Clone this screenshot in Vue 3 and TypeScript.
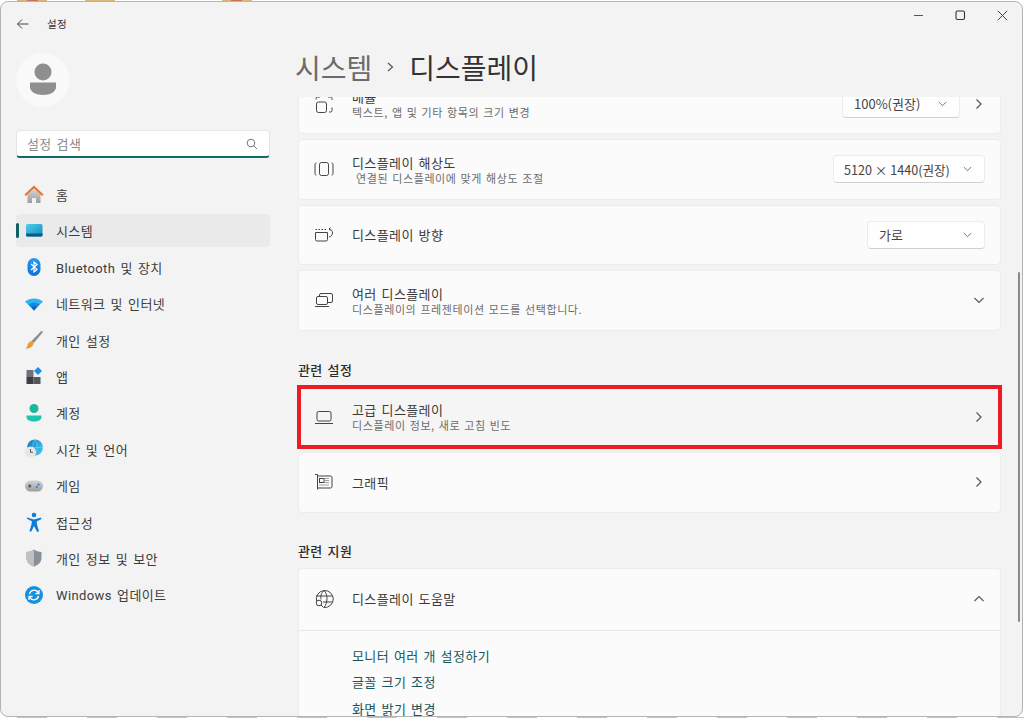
<script setup lang="ts">
const navItems = [
  { id: 'home', label: '홈' },
  { id: 'system', label: '시스템', active: true },
  { id: 'bluetooth', label: 'Bluetooth 및 장치' },
  { id: 'network', label: '네트워크 및 인터넷' },
  { id: 'brush', label: '개인 설정' },
  { id: 'apps', label: '앱' },
  { id: 'account', label: '계정' },
  { id: 'time', label: '시간 및 언어' },
  { id: 'game', label: '게임' },
  { id: 'access', label: '접근성' },
  { id: 'shield', label: '개인 정보 및 보안' },
  { id: 'update', label: 'Windows 업데이트' },
]

const links = ['모니터 여러 개 설정하기', '글꼴 크기 조정', '화면 밝기 변경']
</script>

<template>
  <div class="desktop">
    <div class="window">
      <aside class="sidebar">
        <div class="titlebar">
          <svg class="back" width="14" height="14" viewBox="0 0 14 14" fill="none" stroke="#444" stroke-width="1">
            <path d="M12.5 7H1.5M6 2.5 1.5 7 6 11.500" />
          </svg>
          <span>설정</span>
        </div>

        <div class="avatar">
          <svg width="28" height="34" viewBox="0 0 28 34">
            <circle cx="14" cy="9" r="8.500" fill="#8f8f8f" />
            <path d="M1 19.500h26v4.500c0 5-6 8-13 8S1 29 1 24z" fill="#8f8f8f" />
          </svg>
        </div>

        <div class="search">
          <span>설정 검색</span>
          <svg width="12" height="12" viewBox="0 0 12 12" fill="none" stroke="#777" stroke-width="1">
            <circle cx="5" cy="5" r="3.800" />
            <path d="M7.800 7.800 11 11" />
          </svg>
        </div>

        <nav class="nav">
          <div v-for="item in navItems" :key="item.id" class="nav-item" :class="{ active: item.active }">
            <svg class="nav-icon" width="20" height="20" viewBox="0 0 20 20">
              <defs>
                <linearGradient id="sysGrad" x1="0" y1="0" x2="1" y2="1">
                  <stop offset="0" stop-color="#4fd0ea" />
                  <stop offset="1" stop-color="#1488c4" />
                </linearGradient>
                <linearGradient id="blueGrad" x1="0" y1="0" x2="0" y2="1">
                  <stop offset="0" stop-color="#2a9bf0" />
                  <stop offset="1" stop-color="#0a6fd8" />
                </linearGradient>
                <linearGradient id="greyGrad" x1="0" y1="0" x2="0" y2="1">
                  <stop offset="0" stop-color="#d4d4d4" />
                  <stop offset="1" stop-color="#9d9d9d" />
                </linearGradient>
                <linearGradient id="globeGrad" x1="0" y1="0" x2="1" y2="0.500">
                  <stop offset="0" stop-color="#1272c0" />
                  <stop offset="1" stop-color="#3fc0ea" />
                </linearGradient>
              </defs>
              <template v-if="item.id === 'home'">
                <path d="M3.500 9.500 10 4l6.500 5.500V18H12v-5H8v5H3.500z" fill="url(#greyGrad)" />
                <path d="M1.200 10.200 10 2l8.800 8.200" fill="none" stroke="#e8762a" stroke-width="2.200" />
              </template>
              <template v-else-if="item.id === 'system'">
                <rect x="2" y="3" width="16.500" height="12.500" rx="1.500" fill="url(#sysGrad)" />
                <path d="M2 12.500h16.500v1.500a1.500 1.500 0 0 1-1.500 1.500H3.500A1.500 1.500 0 0 1 2 14z" fill="#0f5b7e" />
              </template>
              <template v-else-if="item.id === 'bluetooth'">
                <rect x="3.500" y="1" width="13" height="18" rx="6.500" fill="url(#blueGrad)" />
                <path d="M7 7l6 5.500-3 2.500V5l3 2.500L7 13" fill="none" stroke="#fff" stroke-width="1.200" />
              </template>
              <template v-else-if="item.id === 'network'">
                <path d="M1 7.500C6 3.500 14 3.500 19 7.500L10 16.500z" fill="#2fb3f2" />
                <path d="M4.500 10.500C8 8 12 8 15.500 10.500L10 16.500z" fill="#1488e0" />
                <path d="M7.300 13.200C9 12 11 12 12.700 13.200L10 16.500z" fill="#0a62c4" />
              </template>
              <template v-else-if="item.id === 'brush'">
                <path d="M17.500.800 19 2 9.800 13 7.500 11z" fill="#8a8f94" />
                <path d="M7.500 11 9.800 13c-.5 3.500-4.500 6-8.800 5.500 2.200-1 2.200-2.500 2.700-4 .5-1.500 2.300-3.200 3.800-3.500z" fill="#ef9a2e" />
              </template>
              <template v-else-if="item.id === 'apps'">
                <rect x="2.500" y="4" width="7" height="7" fill="#6f7378" />
                <rect x="2.500" y="11" width="7" height="7" fill="#3b3f44" />
                <rect x="9.500" y="11" width="7" height="7" fill="#55595e" />
                <path d="M14 1l4 4-4 4-4-4z" fill="#1b8fe4" />
              </template>
              <template v-else-if="item.id === 'account'">
                <circle cx="10" cy="5.500" r="4.500" fill="#18b8a0" />
                <path d="M2.500 12.500h15v1.500c0 3-3.500 4.500-7.500 4.500s-7.500-1.500-7.500-4.500z" fill="#1cc5ac" />
              </template>
              <template v-else-if="item.id === 'time'">
                <circle cx="11" cy="8.500" r="8" fill="url(#globeGrad)" />
                <path d="M11 .500c-3 4-3 11 0 16M11 .500c3 4 3 11 0 16M3 8.500h16" fill="none" stroke="#8fdcf2" stroke-width=".500" />
                <circle cx="6.500" cy="13" r="5.500" fill="#e6e6e6" />
                <path d="M6.500 10v3.300h2.500" fill="none" stroke="#555" stroke-width="1" />
              </template>
              <template v-else-if="item.id === 'game'">
                <rect x="1" y="4.500" width="18" height="11" rx="5.500" fill="url(#greyGrad)" />
                <path d="M4 10h3.500M5.750 8.200v3.600" stroke="#444" stroke-width="1" />
                <circle cx="14.500" cy="8.500" r="1.100" fill="#1b7fd8" />
                <circle cx="12.800" cy="11" r="1.100" fill="#1b7fd8" />
              </template>
              <template v-else-if="item.id === 'access'">
                <circle cx="10" cy="3" r="2.300" fill="#0f7bd8" />
                <path d="M3 5.500 10 7.500l7-2 .6 1.400-5 2.500.5 3.500 2 6.500-2 .3L10 14l-2.600 5.500-2-.3 2-6.500.5-3.500-5-2.500z" fill="#0f7bd8" />
              </template>
              <template v-else-if="item.id === 'shield'">
                <path d="M10 1.500c2 1.500 4.500 2.500 7.500 2.500v6c0 4.500-3.500 7-7.500 8.500-4-1.500-7.500-4-7.500-8.500V4c3 0 5.500-1 7.500-2.500z" fill="#8b9096" />
                <path d="M10 1.500v17c-4-1.500-7.500-4-7.500-8.500V4c3 0 5.500-1 7.500-2.500z" fill="#bcc0c4" />
              </template>
              <template v-else-if="item.id === 'update'">
                <circle cx="10" cy="10" r="9" fill="#1690e0" />
                <path d="M5.500 9a4.700 4.700 0 0 1 8.300-2l.7 1M14.500 11a4.700 4.700 0 0 1-8.300 2l-.7-1" fill="none" stroke="#fff" stroke-width="1.300" />
                <path d="M15 5v3.500h-3.500M5 15v-3.500h3.500" fill="none" stroke="#fff" stroke-width="1.300" />
              </template>
            </svg>
            <span>{{ item.label }}</span>
          </div>
        </nav>
      </aside>

      <main class="content">
        <div class="controls">
          <svg width="11" height="11" viewBox="0 0 11 11" stroke="#555" fill="none"><path d="M1 5.500h9" stroke-width="1.200" /></svg>
          <svg width="11" height="11" viewBox="0 0 11 11" stroke="#333" fill="none"><rect x="1" y="1" width="8.500" height="8.500" rx="1.500" stroke-width="1.100" /></svg>
          <svg width="11" height="11" viewBox="0 0 11 11" stroke="#444" fill="none"><path d="M.800.800l9.400 9.400M10.200.800l-9.400 9.400" /></svg>
        </div>

        <h1 class="page-title">
          <span class="crumb">시스템</span>
          <svg width="9" height="12" viewBox="0 0 9 12" fill="none" stroke="#555" stroke-width="1.200"><path d="M2 2l4.500 4L2 10" /></svg>
          <span>디스플레이</span>
        </h1>

        <div class="scroller">
          <section class="card first">
            <svg class="row-icon" width="20" height="18" viewBox="0 0 20 18" fill="none" stroke="#444" stroke-width="1">
              <rect x="2.500" y="7" width="10" height="10.500" rx="2" />
              <path d="M2 4.500V3.500A1.500 1.500 0 0 1 3.500 2H6M14 2h2.500A1.500 1.500 0 0 1 18 3.500V5M18 12.500v3a1.500 1.500 0 0 1-1.500 1.500H15" />
            </svg>
            <div class="row-text">
              <div class="row-title">배율</div>
              <div class="row-sub">텍스트, 앱 및 기타 항목의 크기 변경</div>
            </div>
            <div class="select scale">
              <span>100%(권장)</span>
              <svg width="9" height="6" viewBox="0 0 9 6" fill="none" stroke="#777"><path d="M.800 1 4.500 4.700 8.200 1" /></svg>
            </div>
            <svg class="chev" width="8" height="12" viewBox="0 0 8 12" fill="none" stroke="#555" stroke-width="1.200"><path d="M1.500 1.500 6 6l-4.500 4.500" /></svg>
          </section>

          <section class="card">
            <svg class="row-icon" width="20" height="18" viewBox="0 0 20 18" fill="none" stroke="#444" stroke-width="1">
              <rect x="5.500" y="2.500" width="9" height="13" rx="2" />
              <path d="M2.500 3C1.500 3 1 3.500 1 4.500v9c0 1 .5 1.500 1.500 1.500M17.500 3c1 0 1.500.5 1.500 1.500v9c0 1-.5 1.500-1.500 1.500" />
            </svg>
            <div class="row-text">
              <div class="row-title">디스플레이 해상도</div>
              <div class="row-sub indent">연결된 디스플레이에 맞게 해상도 조절</div>
            </div>
            <div class="select res">
              <span>5120 × 1440(권장)</span>
              <svg width="9" height="6" viewBox="0 0 9 6" fill="none" stroke="#777"><path d="M.800 1 4.500 4.700 8.200 1" /></svg>
            </div>
          </section>

          <section class="card">
            <svg class="row-icon" width="20" height="18" viewBox="0 0 20 18" fill="none" stroke="#444" stroke-width="1">
              <path d="M1.500 6.500h12v7a1.500 1.500 0 0 1-1.500 1.500H3a1.500 1.500 0 0 1-1.500-1.500z" />
              <path d="M1.500 3.500h12" stroke-dasharray="1.500 1.500" stroke-width="1.200" />
              <path d="M15 3c2.500.5 3.500 2 3.500 4s-1.500 3.500-3.500 4M16.500 1.500 15 3l1.500 1.500" />
            </svg>
            <div class="row-text">
              <div class="row-title">디스플레이 방향</div>
            </div>
            <div class="select dir">
              <span>가로</span>
              <svg width="9" height="6" viewBox="0 0 9 6" fill="none" stroke="#777"><path d="M.800 1 4.500 4.700 8.200 1" /></svg>
            </div>
          </section>

          <section class="card">
            <svg class="row-icon" width="20" height="18" viewBox="0 0 20 18" fill="none" stroke="#444" stroke-width="1">
              <rect x="5.500" y="2.500" width="13" height="9" rx="1.500" />
              <rect x="2.500" y="5.500" width="11" height="8" rx="1.500" fill="#fbfbfb" />
              <path d="M1 15.500h14" />
            </svg>
            <div class="row-text">
              <div class="row-title">여러 디스플레이</div>
              <div class="row-sub">디스플레이의 프레젠테이션 모드를 선택합니다.</div>
            </div>
            <svg class="chev-down" width="12" height="8" viewBox="0 0 12 8" fill="none" stroke="#555" stroke-width="1.100"><path d="M1.500 2 6 6.500 10.500 2" /></svg>
          </section>

          <h2 class="section">관련 설정</h2>

          <section class="card highlighted">
            <svg class="row-icon" width="20" height="18" viewBox="0 0 20 18" fill="none" stroke="#444" stroke-width="1">
              <rect x="3" y="3.500" width="14" height="9.500" rx="1.500" />
              <path d="M1 15.500h18" />
            </svg>
            <div class="row-text">
              <div class="row-title">고급 디스플레이</div>
              <div class="row-sub">디스플레이 정보, 새로 고침 빈도</div>
            </div>
            <svg class="chev" width="8" height="12" viewBox="0 0 8 12" fill="none" stroke="#555" stroke-width="1.200"><path d="M1.500 1.500 6 6l-4.500 4.500" /></svg>
          </section>

          <section class="card graphics">
            <svg class="row-icon" width="20" height="18" viewBox="0 0 20 18" fill="none" stroke="#444" stroke-width="1">
              <path d="M1 1.500h2.500v15M3.500 15h13a1.500 1.500 0 0 0 1.500-1.500v-9A1.500 1.500 0 0 0 16.500 3h-13" />
              <rect x="5.500" y="5.500" width="4.500" height="4" />
              <path d="M11.500 5.500h4M11.500 7.500h4M11.500 9.500h4M5.500 12h10" stroke-dasharray="1 1" />
            </svg>
            <div class="row-text">
              <div class="row-title">그래픽</div>
            </div>
            <svg class="chev" width="8" height="12" viewBox="0 0 8 12" fill="none" stroke="#555" stroke-width="1.200"><path d="M1.500 1.500 6 6l-4.500 4.500" /></svg>
          </section>

          <h2 class="section support">관련 지원</h2>

          <section class="card help">
            <div class="help-head">
              <svg class="row-icon" width="20" height="20" viewBox="0 0 20 20" fill="none" stroke="#444" stroke-width="1">
                <path d="M2.500 12A8.500 8.500 0 1 1 10 18.500" />
                <path d="M2 7h16M9 13h9.300M10 1.500c-3 2.500-3.500 6-3 9M10 1.500c4 4 4 12 0 17" />
                <circle cx="5" cy="14" r="2.800" />
                <path d="M7 16l2.500 2.500" />
              </svg>
              <div class="row-title">디스플레이 도움말</div>
              <svg class="chev-down" width="12" height="8" viewBox="0 0 12 8" fill="none" stroke="#555" stroke-width="1.100"><path d="M1.500 6 6 1.500 10.500 6" /></svg>
            </div>
            <div class="help-links">
              <a v-for="link in links" :key="link">{{ link }}</a>
            </div>
          </section>
        </div>

        <div class="scrollbar"></div>
      </main>
    </div>
  </div>
</template>

<style>
html, body {
  margin: 0;
  background: #fff;
}
</style>

<style scoped>
/* the 1px wallpaper slivers that show above and below the window */
.desktop {
  width: 1024px;
  height: 718px;
  box-sizing: border-box;
  padding: 1px 1px 1px 0;
  overflow: hidden;
  background:
    linear-gradient(90deg, transparent 17px, #d8b878 17px, #d8b878 27px, #d0705a 27px, #d0705a 38px, #d8b878 38px, #d8b878 47px, transparent 47px, transparent 85px, #d8b878 85px, #d8b878 115px, transparent 115px, transparent 222px, #d8b878 222px, #d8b878 231px, #d0705a 231px, #d0705a 242px, #d8b878 242px, #d8b878 252px, transparent 252px) top / 100% 1px no-repeat,
    repeating-linear-gradient(90deg, #d8c48a 0, #d8c48a 30px, transparent 30px, transparent 70px) 17px bottom / 100% 1px no-repeat,
    #fff;
}

.window {
  height: 716px;
  box-sizing: border-box;
  display: flex;
  overflow: hidden;
  background: #f3f3f3;
  border: 1px solid #b4b4b4;
  border-radius: 8px;
  font-family: "Noto Sans CJK KR", "Noto Sans", sans-serif;
  color: #333;
}

.sidebar {
  width: 284px;
  flex: none;
  box-sizing: border-box;
  padding: 0 15px;
}

.titlebar {
  height: 43px;
  display: flex;
  align-items: center;
  gap: 17px;
  font-size: 10.500px;
  letter-spacing: 0.3px;
}

.avatar {
  width: 54px;
  height: 54px;
  margin-top: 8px;
  border-radius: 50%;
  background: #f9f9f9;
  display: flex;
  align-items: center;
  justify-content: center;
}

.search {
  height: 28px;
  margin-top: 23px;
  box-sizing: border-box;
  padding: 0 11px 0 10px;
  display: flex;
  align-items: center;
  justify-content: space-between;
  background: #fff;
  border: 1px solid #e6e6e6;
  border-bottom: 2px solid #0f6a6a;
  border-radius: 4px;
  font-size: 13px;
  letter-spacing: 0.4px;
  word-spacing: 1.500px;
  color: #8a8a8a;
}

.nav {
  margin-top: 20px;
  display: flex;
  flex-direction: column;
  gap: 3.400px;
}

.nav-item {
  position: relative;
  height: 33px;
  display: flex;
  align-items: center;
  gap: 12px;
  padding-left: 8px;
  border-radius: 4px;
  font-family: Roboto, "Noto Sans CJK KR", sans-serif;
  font-size: 13px;
  letter-spacing: 0.4px;
  word-spacing: 1.500px;
  color: #3c3c3c;
}

.nav-item.active {
  background: #eaeaea;
}

.nav-item.active::before {
  content: "";
  position: absolute;
  left: 0;
  top: 9px;
  width: 3px;
  height: 15px;
  border-radius: 2px;
  background: #0f5f63;
}

.nav-icon {
  flex: none;
}

.content {
  position: relative;
  flex: 1;
  min-width: 0;
  display: flex;
  flex-direction: column;
}

.controls {
  position: absolute;
  top: 8px;
  right: 14px;
  display: flex;
  gap: 31px;
}

.page-title {
  height: 95px;
  margin: 0;
  box-sizing: border-box;
  padding: 35px 0 0 10px;
  display: flex;
  align-items: center;
  gap: 14px;
  font-size: 28px;
  font-weight: 400;
  line-height: 46px;
  flex: none;
}

.crumb {
  color: #6b6b6b;
}

.scroller {
  flex: 1;
  min-height: 0;
  overflow: hidden;
  padding: 0 21px 0 13px;
}

.card {
  height: 60.500px;
  box-sizing: border-box;
  margin-bottom: 5px;
  padding: 0 15px;
  display: flex;
  align-items: center;
  background: #fbfbfb;
  border: 1px solid #ececec;
  border-radius: 4px;
}

.card.first {
  height: 61px;
  margin-top: -24px;
}

.row-icon {
  width: 20px;
  flex: none;
}

.row-text {
  flex: 1;
  margin-left: 18px;
  padding-top: 1px;
  min-width: 0;
}

.row-title {
  font-size: 13px;
  letter-spacing: 0.4px;
  word-spacing: 1.500px;
  line-height: 16px;
  color: #3a3a3a;
}

.row-sub {
  font-size: 11px;
  letter-spacing: 0.6px;
  word-spacing: 1px;
  line-height: 14px;
  color: #6c6c6c;
}

.row-sub.indent {
  padding-left: 4px;
}

.select {
  height: 28px;
  box-sizing: border-box;
  display: flex;
  align-items: center;
  justify-content: space-between;
  padding: 0 12px 0 11px;
  background: #fefefe;
  border: 1px solid #ececec;
  border-bottom-color: #d0d0d0;
  border-radius: 4px;
  font-size: 13px;
  color: #444;
}

.select.scale {
  width: 118px;
  margin-right: 15px;
}

.select.res {
  width: 152px;
  padding-left: 10px;
  font-size: 12.600px;
}

.select.dir {
  width: 118px;
}

.chev {
  margin-right: 2px;
}

.chev-down {
  flex: none;
}

.section {
  margin: 31px 0 7px;
  font-size: 13px;
  letter-spacing: 0.4px;
  word-spacing: 1.500px;
  font-weight: 500;
  line-height: 16px;
  color: #2b2b2b;
}

.section.support {
  margin: 30px 0 9px;
}

.highlighted {
  height: 64px;
  margin: 0 -1px 3px;
  padding: 0 13px;
  background: #f5f5f5;
  border: 4px solid #ed1c24;
  border-radius: 0;
}

.card.graphics {
  height: 61px;
}

.card.help {
  height: auto;
  display: block;
  padding: 0;
  margin: 0;
}

.help-head {
  height: 61px;
  display: flex;
  align-items: center;
  padding: 0 15px;
  border-bottom: 1px solid #e8e8e8;
}

.help-head .row-title {
  flex: 1;
  margin-left: 18px;
}

.help-links {
  padding: 17px 0 0 53px;
  display: flex;
  flex-direction: column;
  gap: 10px;
  font-size: 13px;
  letter-spacing: 0.4px;
  word-spacing: 1.500px;
  line-height: 16.500px;
  color: #17565a;
}

.scrollbar {
  position: absolute;
  right: 2px;
  top: 270px;
  width: 2px;
  height: 350px;
  border-radius: 1px;
  background: #8a8a8a;
}
</style>
